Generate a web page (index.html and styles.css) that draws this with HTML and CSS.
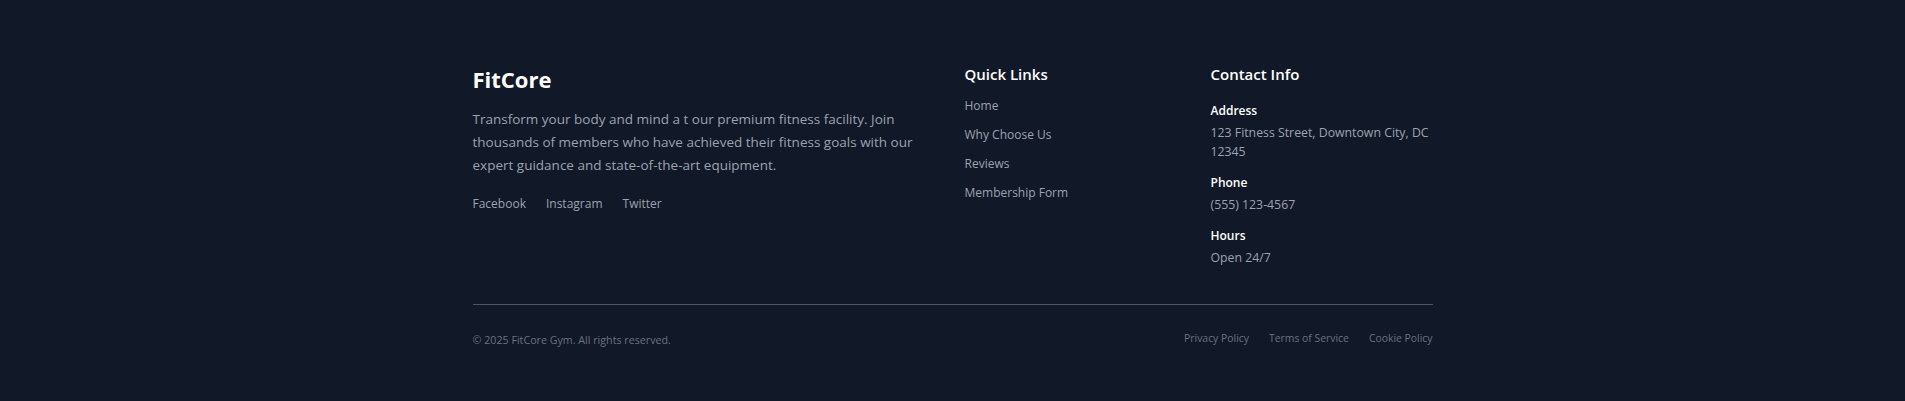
FILE: index.html
```html
<!DOCTYPE html>
<html lang="en">
<head>
<meta charset="utf-8">
<title>FitCore Footer</title>
<link rel="stylesheet" href="styles.css">
</head>
<body>
<footer class="footer">
  <div class="container">
    <div class="grid">
      <div class="brand">
        <h2 class="brand-title">FitCore</h2>
        <p class="brand-text">Transform your body and mind a t our premium fitness facility. Join thousands of members who have achieved their fitness goals with our expert guidance and state-of-the-art equipment.</p>
        <div class="social">
          <a href="#">Facebook</a>
          <a href="#">Instagram</a>
          <a href="#">Twitter</a>
        </div>
      </div>
      <div class="col">
        <h3 class="col-title">Quick Links</h3>
        <ul class="links">
          <li><a href="#">Home</a></li>
          <li><a href="#">Why Choose Us</a></li>
          <li><a href="#">Reviews</a></li>
          <li><a href="#">Membership Form</a></li>
        </ul>
      </div>
      <div class="col">
        <h3 class="col-title contact-title">Contact Info</h3>
        <div class="contact">
          <div class="contact-item">
            <div class="contact-label">Address</div>
            <div class="contact-value">123 Fitness Street, Downtown City, DC 12345</div>
          </div>
          <div class="contact-item">
            <div class="contact-label">Phone</div>
            <div class="contact-value">(555) 123-4567</div>
          </div>
          <div class="contact-item">
            <div class="contact-label">Hours</div>
            <div class="contact-value">Open 24/7</div>
          </div>
        </div>
      </div>
    </div>
    <div class="bottom">
      <p class="copy">© 2025 FitCore Gym. All rights reserved.</p>
      <div class="legal">
        <a href="#">Privacy Policy</a>
        <a href="#">Terms of Service</a>
        <a href="#">Cookie Policy</a>
      </div>
    </div>
  </div>
</footer>
</body>
</html>
```

FILE: styles.css
```css
* { box-sizing: border-box; }
html, body {
  margin: 0;
  padding: 0;
  background: #111827;
}
body {
  font-family: "Open Sans", "Noto Sans", "Liberation Sans", sans-serif;
  color: #9ca3af;
}
a { color: inherit; text-decoration: none; }
.footer {
  background: #111827;
  padding: 61px 0 40px;
  min-height: 401px;
}
.container {
  max-width: 960px;
  margin: 0 auto;
}
.grid {
  display: grid;
  grid-template-columns: repeat(4, 1fr);
  column-gap: 24px;
}
.brand { grid-column: span 2; }
.brand-title {
  margin: 1px 0 12px;
  font-size: 22px;
  line-height: 34px;
  font-weight: 700;
  color: #ffffff;
}
.brand-text {
  margin: 0 0 17px;
  font-size: 13.5px;
  line-height: 23px;
  color: #9ca3af;
}
.social {
  display: flex;
  gap: 20px;
  font-size: 12px;
  line-height: 20px;
}
.col-title {
  margin: 0 0 9px;
  font-size: 15px;
  line-height: 26px;
  font-weight: 600;
  color: #ffffff;
}
.contact-title { margin-bottom: 14px; }
.links {
  list-style: none;
  margin: 0;
  padding: 0;
  display: flex;
  flex-direction: column;
  gap: 9px;
  font-size: 12px;
  line-height: 20px;
}
.contact {
  display: flex;
  flex-direction: column;
  gap: 12px;
}
.contact-label {
  color: #ffffff;
  font-size: 12px;
  font-weight: 600;
  line-height: 19px;
  margin-bottom: 3px;
}
.contact-value {
  font-size: 12.3px;
  line-height: 19px;
  color: #9ca3af;
}
.bottom {
  margin-top: 37px;
  border-top: 1px solid #4b5563;
  padding-top: 25px;
  display: flex;
  justify-content: space-between;
  align-items: flex-start;
  line-height: 16px;
  color: #6b7280;
}
.copy {
  margin: 0;
  padding-top: 2px;
  font-size: 10.7px;
}
.legal {
  display: flex;
  gap: 20px;
  font-size: 10.4px;
}
```
